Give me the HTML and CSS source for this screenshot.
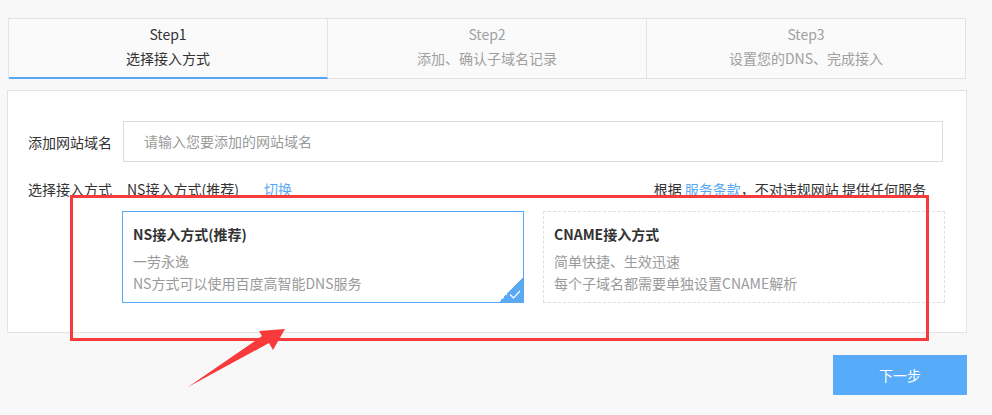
FILE: index.html
```html
<!DOCTYPE html>
<html lang="zh-CN">
<head>
<meta charset="utf-8">
<title>接入</title>
<link rel="stylesheet" href="styles.css">
</head>
<body>
<div class="page">
  <div class="steps">
    <div class="step active">
      <div class="step-num">Step1</div>
      <div class="step-name">选择接入方式</div>
    </div>
    <div class="step">
      <div class="step-num">Step2</div>
      <div class="step-name">添加、确认子域名记录</div>
    </div>
    <div class="step">
      <div class="step-num">Step3</div>
      <div class="step-name">设置您的DNS、完成接入</div>
    </div>
  </div>

  <div class="panel">
    <div class="row">
      <div class="label">添加网站域名</div>
      <div class="input">请输入您要添加的网站域名</div>
    </div>
    <div class="row row-mode">
      <div class="label">选择接入方式</div>
      <div class="mode">NS接入方式(推荐)</div>
      <a class="link switch">切换</a>
      <div class="terms">根据 <a class="link">服务条款</a>，不对违规网站 提供任何服务</div>
    </div>
    <div class="cards">
      <div class="card selected">
        <div class="card-title">NS接入方式(推荐)</div>
        <div class="card-line">一劳永逸</div>
        <div class="card-line">NS方式可以使用百度高智能DNS服务</div>
        <div class="corner">
          <svg width="12" height="9" viewBox="0 0 12 9"><path d="M1 4.5 L4.5 8 L11 1" fill="none" stroke="#fff" stroke-width="1.2"/></svg>
        </div>
      </div>
      <div class="card">
        <div class="card-title">CNAME接入方式</div>
        <div class="card-line">简单快捷、生效迅速</div>
        <div class="card-line">每个子域名都需要单独设置CNAME解析</div>
      </div>
    </div>
  </div>

  <div class="actions">
    <button class="next">下一步</button>
  </div>
</div>

<div class="mark-rect"></div>
<svg class="mark-arrow" width="992" height="415" viewBox="0 0 992 415">
  <polygon points="188,387 262,336 259,331 285,329 273,350 269,343" fill="#f83a3a"/>
</svg>
</body>
</html>
```

FILE: styles.css
```css
html, body {
  margin: 0;
  padding: 0;
  background: #f8f8f8;
}
body {
  font-family: "Noto Sans CJK SC", "Microsoft YaHei", sans-serif;
  font-size: 14px;
  color: #333;
}
.page {
  padding: 18px 25px 0 8px;
}
.steps {
  display: flex;
  border: 1px solid #e3e3e3;
  background: #fafafa;
  width: 956px;
}
.step {
  flex: 1;
  text-align: center;
  padding: 3px 0 8px;
  border-right: 1px solid #e3e3e3;
  color: #a0a0a0;
}
.step:last-child {
  border-right: none;
}
.step.active {
  color: #333;
  box-shadow: 0 1px 0 #55a8f3, inset 0 -1px 0 #55a8f3;
}
.step-num,
.step-name {
  line-height: 24px;
  font-size: 14px;
}
.panel {
  box-sizing: border-box;
  margin: 11px 0 0 -1px;
  background: #fff;
  border: 1px solid #e3e3e3;
  width: 960px;
  height: 243px;
  padding: 30px 21px 0 20px;
}
.row {
  display: flex;
  align-items: center;
}
.label {
  width: 95px;
  line-height: 20px;
  color: #333;
}
.input {
  flex: 1;
  height: 39px;
  line-height: 39px;
  border: 1px solid #dcdcdc;
  padding-left: 20px;
  margin-right: 2px;
  color: #9a9a9a;
}
.row-mode {
  margin-top: 17px;
  line-height: 20px;
}
.mode {
  margin-left: 4px;
}
.link {
  color: #5aa9f3;
  text-decoration: none;
}
.switch {
  margin-left: 25px;
}
.terms {
  margin-left: auto;
  margin-right: 19px;
}
.cards {
  display: flex;
  gap: 19px;
  margin: 12px 0 0 94px;
}
.card {
  position: relative;
  width: 381px;
  height: 72px;
  padding: 10px 10px 8px;
  border: 1px dashed #dedede;
}
.card.selected {
  border: 1px solid #5aa9f3;
}
.card-title {
  font-weight: bold;
  line-height: 24px;
  color: #333;
}
.card-line {
  line-height: 22px;
  color: #9a9a9a;
}
.card-title + .card-line {
  margin-top: 4px;
}
.corner {
  position: absolute;
  right: 0;
  bottom: 0;
  width: 24px;
  height: 24px;
  background: linear-gradient(135deg, transparent 50%, #5aa9f3 50%);
}
.corner svg {
  position: absolute;
  right: 2px;
  bottom: 3px;
}
.actions {
  display: flex;
  justify-content: flex-end;
  margin-top: 22px;
}
.next {
  width: 134px;
  height: 40px;
  border: none;
  background: #58abf8;
  color: #fff;
  font-family: "Noto Sans CJK SC", sans-serif;
  font-size: 14px;
}
.mark-rect {
  position: absolute;
  left: 70px;
  top: 195px;
  width: 853px;
  height: 140px;
  border: 3px solid #f83a3a;
}
.mark-arrow {
  position: absolute;
  left: 0;
  top: 0;
  pointer-events: none;
}
```
